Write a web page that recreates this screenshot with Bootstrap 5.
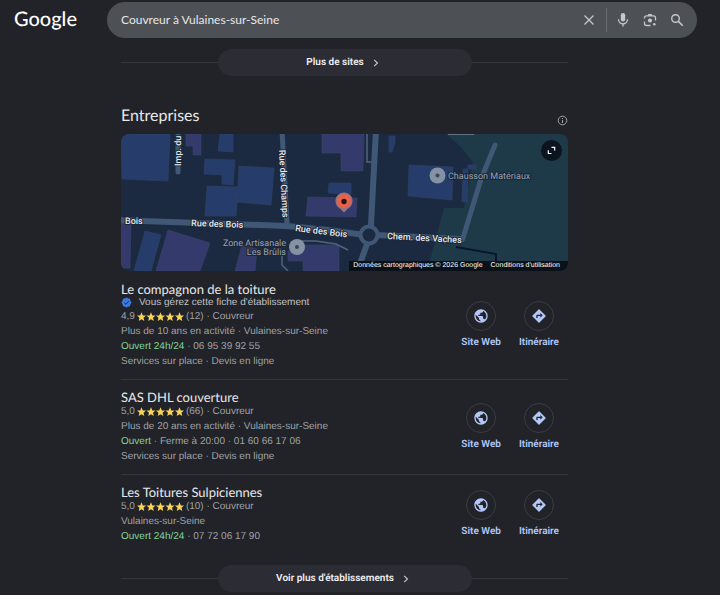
<!DOCTYPE html>
<html lang="fr" data-bs-theme="dark">
<head>
<meta charset="utf-8">
<meta name="viewport" content="width=device-width, initial-scale=1">
<title>Couvreur à Vulaines-sur-Seine</title>
<link href="https://cdn.jsdelivr.net/npm/bootstrap@5.3.0/dist/css/bootstrap.min.css" rel="stylesheet">
<style>
  body { background: #222328; color: #9fa2a7; font: 10px/15px "Liberation Sans", Arial, sans-serif; text-rendering: geometricPrecision; }
  a { text-decoration: none; }
  svg { display: block; flex: none; }
  .product { font-family: Roboto, "Open Sans", sans-serif; }
  .site-header { padding: 2px 23px 0 14px; }
  .brand { width: 93px; flex: none; font: 500 20px/34px Lato, sans-serif; color: #fff; }
  .brand:hover { color: #fff; }
  .search-box { height: 36px; background: #4d5055; padding: 0 13px 0 14px; color: #c4c7cb; }
  .search-box input { background: none; border: 0; outline: 0; min-width: 0; color: #e8e8ea; font: 400 12px/16px Lato, sans-serif; padding: 0; }
  .search-box button, .expand { background: none; border: 0; padding: 0; color: inherit; }
  .search-tools { gap: 13px; }
  .split { width: 1px; height: 24px; background: #686b70; margin: 0 -4px 0 -2px; }
  .results { max-width: 568px; padding-left: 121px; }
  .rule { height: 1px; background: #36373c; }
  .more-row { margin-top: 11px; }
  .more { width: 254px; height: 27px; padding-right: 4px; background: #2c2d34; color: #eeeff2; font-size: 10px; font-weight: 600; gap: 9px; }
  .more:hover { background: #36373f; color: #fff; }
  .section-head { padding: 30px 0 8px; }
  .heading { font: 400 16px/20px Lato, sans-serif; color: #e8e8ea; }
  .map { border-radius: 8px; margin-bottom: 11px; }
  .map > svg { width: 100%; height: auto; }
  .map text { font-family: Roboto, sans-serif; font-size: 9px; font-weight: 500; fill: #e6eaf0; stroke: #1b2638; stroke-width: 2px; paint-order: stroke; }
  .map .place { fill: #97a2b2; font-weight: 400; }
  .expand { top: 6px; right: 6px; width: 21px; height: 21px; background: #0c151f; color: #fff; }
  .legal { right: 0; bottom: 0; background: #0b1119; font-size: 7px; line-height: 10px; padding: 0 8px 0 4px; gap: 8px; }
  .legal, .legal a { color: #fff; }
  .entry + .entry { border-top: 1px solid #36373c; padding-top: 10px; }
  .entry { padding-bottom: 10px; }
  .entry h3 { font: 400 13px/14px Lato, sans-serif; color: #e8e8ea; }
  .owner { line-height: 13px; gap: 7px; color: #bfc1c5; }
  .rating { gap: 2px; }
  .open { color: #81d69a; }
  .actions { gap: 18px; margin-right: 9px; padding-bottom: 1px; }
  .action { color: #b3c8f8; font-size: 10px; line-height: 13px; font-weight: 600; gap: 5px; }
  .action:hover { color: #d3e0ff; }
  .ring { width: 30px; height: 30px; border: 1px solid #3c3d43; }
</style>
<script src="https://cdn.jsdelivr.net/npm/bootstrap@5.3.0/dist/js/bootstrap.bundle.min.js"></script>
</head>
<body>
<svg width="0" height="0" class="position-absolute" aria-hidden="true">
  <defs>
    <symbol id="stars" viewBox="0 0 47 10">
      <g fill="#f8d458">
        <path id="star" d="M4.5 .3 5.800 3.400 9 3.600 6.500 5.700 7.300 9 4.500 7.300 1.700 9 2.500 5.700 0 3.600 3.200 3.400Z"/>
        <use href="#star" x="9.5"/><use href="#star" x="19"/><use href="#star" x="28.5"/><use href="#star" x="38"/>
      </g>
    </symbol>
    <symbol id="globe" viewBox="0 0 24 24"><path fill="currentColor" d="M12 2C6.48 2 2 6.48 2 12s4.48 10 10 10 10-4.480 10-10S17.520 2 12 2zm-1 17.930c-3.950-.490-7-3.850-7-7.930 0-.620.080-1.210.210-1.790L9 15v1c0 1.100.900 2 2 2v1.930zm6.900-2.540c-.260-.810-1-1.390-1.900-1.390h-1v-3c0-.550-.450-1-1-1H8v-2h2c.550 0 1-.450 1-1V7h2c1.100 0 2-.900 2-2v-.410c2.930 1.190 5 4.060 5 7.410 0 2.080-.800 3.970-2.100 5.390z"/></symbol>
    <symbol id="route" viewBox="0 0 24 24"><path fill="currentColor" d="M21.710 11.290l-9-9a1 1 0 0 0-1.410 0l-9 9a1 1 0 0 0 0 1.410l9 9a1 1 0 0 0 1.410 0l9-9a1 1 0 0 0 0-1.410zM14 14.500V12h-4v3H8v-4c0-.550.450-1 1-1h5V7.500l3.500 3.500-3.500 3.500z"/></symbol>
    <symbol id="chevron" viewBox="0 0 6 8"><path d="M1.200.8 4.500 4 1.200 7.200" fill="none" stroke="#c9cbd0" stroke-width="1.100"/></symbol>
  </defs>
</svg>

<header class="site-header product d-flex">
  <a class="brand" href="#">Google</a>
  <form class="search-box rounded-pill d-flex align-items-center flex-grow-1" role="search">
    <input class="flex-grow-1" type="text" aria-label="Rechercher" value="Couvreur à Vulaines-sur-Seine">
    <div class="search-tools d-flex align-items-center">
      <button type="reset" aria-label="Effacer"><svg width="12" height="12" viewBox="0 0 12 12"><path d="M1.500 1.500l9 9m0-9l-9 9" stroke="currentColor" stroke-width="1.300"/></svg></button>
      <span class="split"></span>
      <button type="button" aria-label="Recherche vocale"><svg width="14" height="16" viewBox="0 0 14 16"><rect x="4.800" y="1" width="4.400" height="8.500" rx="2.200" fill="currentColor"/><path d="M2.500 7.300a4.500 4.500 0 0 0 9 0M7 11.800V14.500" fill="none" stroke="currentColor" stroke-width="1.300"/></svg></button>
      <button type="button" aria-label="Recherche par image"><svg width="14" height="14" viewBox="0 0 14 14"><path d="M1.500 5.500V4.800a2 2 0 0 1 2-2H10.500a2 2 0 0 1 2 2V7.500M1.500 8.500V10.500a2 2 0 0 0 2 2H7.500" fill="none" stroke="currentColor" stroke-width="1.300"/><path d="M4.500 2.800 5.300 1H8.700L9.500 2.800Z" fill="currentColor"/><circle cx="7" cy="7.500" r="2.100" fill="currentColor"/><circle cx="11.300" cy="11.300" r="1.300" fill="currentColor"/></svg></button>
      <button type="submit" aria-label="Lancer la recherche"><svg width="14" height="14" viewBox="0 0 14 14"><circle cx="5.500" cy="5.500" r="3.800" fill="none" stroke="currentColor" stroke-width="1.400"/><path d="M8.400 8.400l4.400 4.400" stroke="currentColor" stroke-width="1.500"/></svg></button>
    </div>
  </form>
</header>

<main class="results">
  <div class="more-row d-flex align-items-center product">
    <span class="rule flex-grow-1"></span>
    <a class="more rounded-pill d-flex align-items-center justify-content-center" href="#">Plus de sites <svg width="6" height="8"><use href="#chevron"/></svg></a>
    <span class="rule flex-grow-1"></span>
  </div>

  <div class="section-head d-flex justify-content-between align-items-end">
    <h2 class="heading m-0">Entreprises</h2>
    <svg width="11" height="11" viewBox="0 0 11 11" role="img" aria-label="À propos de ces résultats"><circle cx="5.500" cy="5.500" r="4.300" fill="none" stroke="currentColor"/><path d="M5.500 5v3M5.500 3v1" stroke="currentColor"/></svg>
  </div>

  <div class="map position-relative overflow-hidden">
    <svg viewBox="0 0 447 137" role="img" aria-label="Carte des entreprises">
      <rect width="447" height="137" fill="#1c2a41"/>
      <path d="M325 0H447V137H306L323 74H343L352 28 339 12Z" fill="#1e3947"/>
      <g fill="#263d6b" stroke="#304366" stroke-width=".6">
        <path d="M0 0H49L47 47 1 45ZM99 0H112V18L97 17ZM84 25 114 26 112 51 101 50 101 41 83 40ZM118 32 153 34 150 71 116 68ZM86 52 116 53 116 68 115 82 84 82ZM24 97 40 101 30 137H13ZM208 49H230V60L207 59ZM288 31 332 33 331 66 287 62Z"/>
        <path d="M268 2H274V8L271 18H268ZM342 35H347L346 68H341ZM347 31H355V35H347Z"/>
      </g>
      <g fill="#343b6c" stroke="#3b436b" stroke-width=".6">
        <path d="M65 0H80V21H72V12H65ZM0 88H10L9 134H0ZM47 96 89 109 79 137H35ZM121 111 136 115 134 137H114ZM201 0H243L242 37H220V19H201ZM187 63 236 64 235 83 185 82ZM182 111H218V137H182V127H167V117H182Z"/>
      </g>
      <path d="M175 107H195L215 110 227 116M161 119V131L167 137M246 0V28H252" fill="none" stroke="#51637c" stroke-width="1.500"/>
      <path d="M327 0H353" stroke="#7a8798" stroke-width="1.500"/>
      <g fill="none" stroke="#405875" stroke-width="6" stroke-linecap="round">
        <path d="M57-4V38M161-4 166 90" stroke-width="5"/>
        <path d="M-4 86 165 92Q205 95 243 101M254 101Q300 103 341 105"/>
        <path d="M255-4 250 91M246 110 235 141"/>
        <path d="M374 11 360 45 342 104" stroke-width="5"/>
        <circle cx="248" cy="101" r="8.500" stroke-width="4" fill="#1c2a41"/>
      </g>
      <path d="M335 113 375 120V129" fill="none" stroke="#081634" stroke-width="2"/>
      <text x="4" y="90">Bois</text>
      <text x="70" y="92" transform="rotate(2 70 92)">Rue des Bois</text>
      <text x="174" y="97" transform="rotate(7 174 97)">Rue des Bois</text>
      <text x="266" y="105" transform="rotate(3 266 105)">Chem. des Vaches</text>
      <text x="60" y="32" transform="rotate(-90 60 32)">Imp. du</text>
      <text x="158" y="16" transform="rotate(87 158 16)">Rue des Champs</text>
      <text class="place" x="165" y="112" text-anchor="end">Zone Artisanale</text>
      <text class="place" x="165" y="121" text-anchor="end">Les Brûlis</text>
      <text class="place" x="327" y="45">Chausson Matériaux</text>
      <g fill="#8492a3"><circle cx="176" cy="113" r="8"/><circle cx="316.500" cy="41.500" r="8"/></g>
      <g fill="#33475f"><circle cx="176" cy="113" r="2"/><circle cx="316.500" cy="41.500" r="2"/></g>
      <path d="M223 78.500 219 74.500A8.500 8.500 0 1 1 227 74.500Z" fill="#98737c"/>
      <circle cx="223" cy="67" r="7" fill="#e9614b"/><circle cx="223" cy="67.500" r="2.700" fill="#26161c"/>
    </svg>
    <button class="expand position-absolute rounded-circle d-flex align-items-center justify-content-center" type="button" aria-label="Agrandir la carte"><svg width="9" height="9" viewBox="0 0 9 9"><path d="M4.500 1.300H7.700V4.500M1.300 4.300V7.500H4.500" fill="none" stroke="currentColor" stroke-width="1.200"/></svg></button>
    <div class="legal position-absolute d-flex"><span>Données cartographiques © 2026 Google</span><a href="#">Conditions d'utilisation</a></div>
  </div>

  <article class="entry d-flex align-items-center justify-content-between">
    <div>
      <h3 class="m-0">Le compagnon de la toiture</h3>
      <div class="owner d-flex align-items-center"><svg width="11" height="11" viewBox="0 0 11 11"><path d="M5.500.5 7 1.300 8.900 1.700 9.400 3.600 10.500 5.500 9.400 7.400 8.900 9.300 7 9.700 5.500 10.500 4 9.700 2.100 9.300 1.600 7.400.5 5.500 1.600 3.600 2.100 1.700 4 1.300Z" fill="#3c78e0"/><path d="M3.200 5.600 4.900 7.200 7.800 4.100" fill="none" stroke="#1c2a4c"/></svg>Vous gérez cette fiche d'établissement</div>
      <div class="rating d-flex align-items-center">4,9 <svg width="47" height="10"><use href="#stars"/></svg> (12) · Couvreur</div>
      <div>Plus de 10 ans en activité · Vulaines-sur-Seine</div>
      <div><span class="open">Ouvert 24h/24</span> · 06 95 39 92 55</div>
      <div>Services sur place · Devis en ligne</div>
    </div>
    <div class="actions product d-flex">
      <a class="action d-flex flex-column align-items-center" href="#"><span class="ring rounded-circle d-flex align-items-center justify-content-center"><svg width="16" height="16"><use href="#globe"/></svg></span>Site Web</a>
      <a class="action d-flex flex-column align-items-center" href="#"><span class="ring rounded-circle d-flex align-items-center justify-content-center"><svg width="16" height="16"><use href="#route"/></svg></span>Itinéraire</a>
    </div>
  </article>

  <article class="entry d-flex align-items-center justify-content-between">
    <div>
      <h3 class="m-0">SAS DHL couverture</h3>
      <div class="rating d-flex align-items-center">5,0 <svg width="47" height="10"><use href="#stars"/></svg> (66) · Couvreur</div>
      <div>Plus de 20 ans en activité · Vulaines-sur-Seine</div>
      <div><span class="open">Ouvert</span> · Ferme à 20:00 · 01 60 66 17 06</div>
      <div>Services sur place · Devis en ligne</div>
    </div>
    <div class="actions product d-flex">
      <a class="action d-flex flex-column align-items-center" href="#"><span class="ring rounded-circle d-flex align-items-center justify-content-center"><svg width="16" height="16"><use href="#globe"/></svg></span>Site Web</a>
      <a class="action d-flex flex-column align-items-center" href="#"><span class="ring rounded-circle d-flex align-items-center justify-content-center"><svg width="16" height="16"><use href="#route"/></svg></span>Itinéraire</a>
    </div>
  </article>

  <article class="entry d-flex align-items-center justify-content-between">
    <div>
      <h3 class="m-0">Les Toitures Sulpiciennes</h3>
      <div class="rating d-flex align-items-center">5,0 <svg width="47" height="10"><use href="#stars"/></svg> (10) · Couvreur</div>
      <div>Vulaines-sur-Seine</div>
      <div><span class="open">Ouvert 24h/24</span> · 07 72 06 17 90</div>
    </div>
    <div class="actions product d-flex">
      <a class="action d-flex flex-column align-items-center" href="#"><span class="ring rounded-circle d-flex align-items-center justify-content-center"><svg width="16" height="16"><use href="#globe"/></svg></span>Site Web</a>
      <a class="action d-flex flex-column align-items-center" href="#"><span class="ring rounded-circle d-flex align-items-center justify-content-center"><svg width="16" height="16"><use href="#route"/></svg></span>Itinéraire</a>
    </div>
  </article>

  <div class="more-row d-flex align-items-center product">
    <span class="rule flex-grow-1"></span>
    <a class="more rounded-pill d-flex align-items-center justify-content-center" href="#">Voir plus d'établissements <svg width="6" height="8"><use href="#chevron"/></svg></a>
    <span class="rule flex-grow-1"></span>
  </div>
</main>
</body>
</html>
